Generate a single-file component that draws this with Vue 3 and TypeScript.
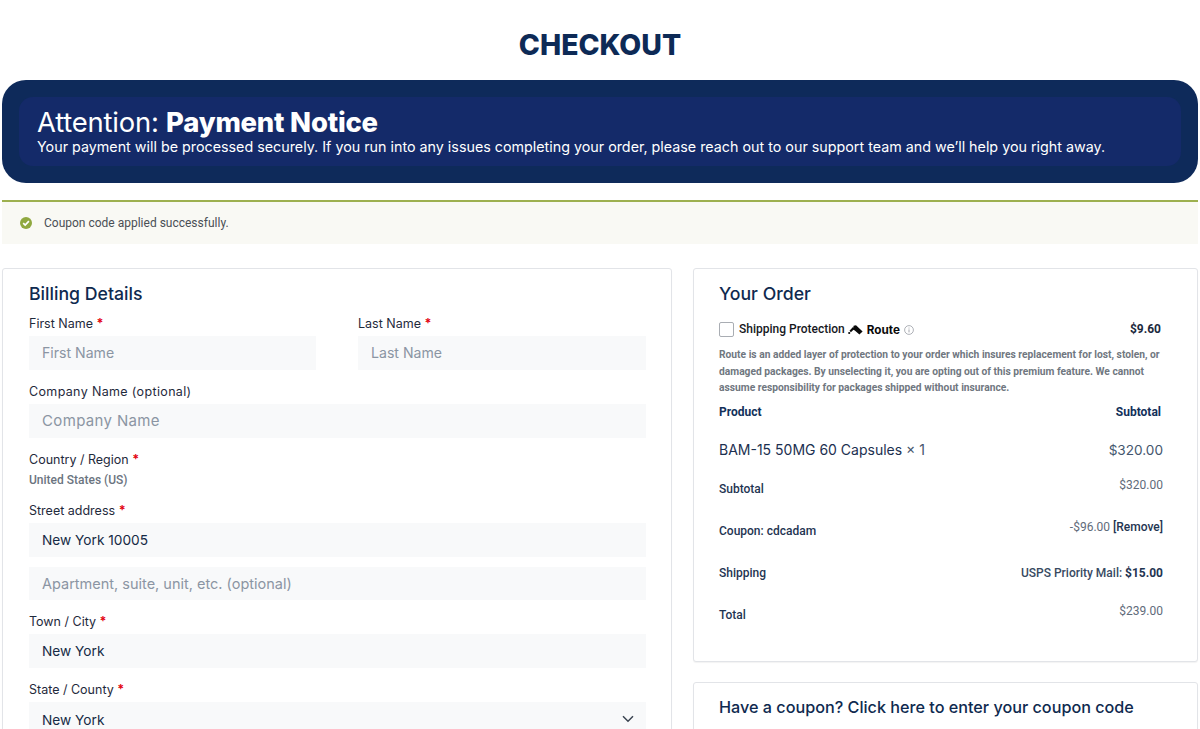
<script setup lang="ts">
const totals = [
  { label: 'Subtotal', amount: '$320.00' },
  { label: 'Coupon: cdcadam', amount: '-$96.00', link: '[Remove]' },
]
</script>

<template>
  <div class="page">
    <h1 class="page-title">CHECKOUT</h1>

    <section class="notice-banner">
      <div class="notice-inner">
        <h2>Attention: <strong>Payment Notice</strong></h2>
        <p>Your payment will be processed securely. If you run into any issues completing your order, please reach out to our support team and we’ll help you right away.</p>
      </div>
    </section>

    <div class="success-msg">
      <svg class="check" width="12" height="12" viewBox="0 0 12 12">
        <circle cx="6" cy="6" r="6" fill="#8fa83f" />
        <path d="M3.2 6.2 5.2 8.1 8.9 4.2" fill="none" stroke="#fff" stroke-width="1.7" />
      </svg>
      <span>Coupon code applied successfully.</span>
    </div>

    <div class="columns">
      <section class="card billing">
        <h3>Billing Details</h3>
        <div class="name-row">
          <div class="field">
            <label>First Name <em>*</em></label>
            <input type="text" placeholder="First Name" />
          </div>
          <div class="field">
            <label>Last Name <em>*</em></label>
            <input type="text" placeholder="Last Name" />
          </div>
        </div>
        <div class="field company">
          <label>Company Name (optional)</label>
          <input type="text" placeholder="Company Name" />
        </div>
        <div class="field country">
          <label>Country / Region <em>*</em></label>
          <strong>United States (US)</strong>
        </div>
        <div class="field">
          <label>Street address <em>*</em></label>
          <input type="text" value="New York 10005" />
          <input class="second-line" type="text" placeholder="Apartment, suite, unit, etc. (optional)" />
        </div>
        <div class="field">
          <label>Town / City <em>*</em></label>
          <input type="text" value="New York" />
        </div>
        <div class="field">
          <label>State / County <em>*</em></label>
          <div class="select">
            <span>New York</span>
            <svg width="12" height="8" viewBox="0 0 12 8">
              <path d="M1 1.2 6 6.2 11 1.2" fill="none" stroke="#3a4350" stroke-width="1.5" />
            </svg>
          </div>
        </div>
      </section>

      <div class="side">
        <section class="card order">
          <h3>Your Order</h3>
          <div class="protect-row">
            <span class="checkbox"></span>
            <span class="protect-label">Shipping Protection</span>
            <svg class="route-logo" width="15" height="10" viewBox="0 0 15 10">
              <path d="M5.6 0.8 8 0.3 14.6 6.6 11.4 9.4 6.8 5.4 5 4.4Z" fill="#0a0a0a" />
              <path d="M5 2 6.3 4 2.9 7.2 1.5 5.8Z" fill="#0a0a0a" />
              <circle cx="1.2" cy="8" r="1.1" fill="#0a0a0a" />
            </svg>
            <span class="route-name">Route</span>
            <svg class="info" width="10" height="10" viewBox="0 0 10 10">
              <circle cx="5" cy="5" r="4.4" fill="none" stroke="#8d9199" stroke-width="0.7" />
              <path d="M5 4.4V7.4M5 2.6V3.5" stroke="#8d9199" stroke-width="0.8" />
            </svg>
            <span class="protect-price">$9.60</span>
          </div>
          <p class="protect-desc">Route is an added layer of protection to your order which insures replacement for lost, stolen, or damaged packages. By unselecting it, you are opting out of this premium feature. We cannot assume responsibility for packages shipped without insurance.</p>
          <div class="table-head">
            <span>Product</span>
            <span>Subtotal</span>
          </div>
          <div class="item-row">
            <span>BAM-15 50MG 60 Capsules <small>× 1</small></span>
            <span class="item-price">$320.00</span>
          </div>
          <div v-for="row in totals" :key="row.label" class="total-row">
            <span class="total-label">{{ row.label }}</span>
            <span class="total-value">{{ row.amount }} <a v-if="row.link">{{ row.link }}</a></span>
          </div>
          <div class="total-row">
            <span class="total-label">Shipping</span>
            <span class="ship-value">USPS Priority Mail: <b>$15.00</b></span>
          </div>
          <div class="total-row">
            <span class="total-label">Total</span>
            <span class="total-value">$239.00</span>
          </div>
        </section>

        <section class="card coupon">
          <h3>Have a coupon? Click here to enter your coupon code</h3>
        </section>
      </div>
    </div>
  </div>
</template>

<style>
html,
body {
  overflow: hidden;
  background: #fff;
}
</style>

<style scoped>
.page {
  height: 729px;
  overflow: hidden;
  padding: 0 2px;
  box-sizing: border-box;
  font-family: Inter, 'Liberation Sans', sans-serif;
  color: #0f2a4f;
}

.page-title {
  margin: 0;
  padding-top: 28px;
  height: 80px;
  box-sizing: border-box;
  text-align: center;
  font-size: 28.4px;
  line-height: 34px;
  font-weight: 800;
  color: #0d2a56;
}

.notice-banner {
  background: #0e2a5a;
  border-radius: 24px;
  padding: 17px;
  height: 103px;
  box-sizing: border-box;
}

.notice-inner {
  height: 69px;
  background: #142a69;
  border-radius: 14px;
  padding: 11px 18px 0;
  box-sizing: border-box;
  color: #fff;
}

.notice-inner h2 {
  margin: 0;
  font-size: 27.4px;
  line-height: 28px;
  font-weight: 400;
  letter-spacing: -0.2px;
}

.notice-inner h2 strong {
  font-weight: 800;
}

.notice-inner p {
  margin: 1px 0 0;
  font-size: 14.3px;
  line-height: 20px;
  white-space: nowrap;
}

.success-msg {
  margin-top: 17px;
  height: 44px;
  box-sizing: border-box;
  border-top: 2px solid #9db04f;
  background: #f9f9f4;
  display: flex;
  align-items: center;
  gap: 12px;
  padding-left: 18px;
  font-family: Roboto, 'Liberation Sans', sans-serif;
  font-size: 12px;
  color: #4a4f55;
}

.columns {
  margin-top: 24px;
  display: flex;
  align-items: flex-start;
  gap: 21px;
}

.card {
  background: #fff;
  border: 1px solid #e2e4e8;
  border-radius: 3px;
  box-sizing: border-box;
  box-shadow: 0 1px 1px rgba(0, 0, 0, 0.05);
}

.card h3 {
  margin: 0;
  font-size: 17.7px;
  line-height: 24px;
  font-weight: 500;
  color: #0f2a4f;
}

.billing {
  width: 670px;
  flex: none;
  height: 800px;
  padding: 13px 25px 0 26px;
}

.field {
  display: flex;
  flex-direction: column;
  margin-bottom: 12px;
}

.field label {
  font-size: 12.5px;
  line-height: 18px;
  color: #1f2a3c;
  padding-top: 1px;
  margin-bottom: 3px;
}

.field label em {
  color: #e30613;
  font-style: normal;
  font-weight: 700;
}

.field input,
.select {
  height: 34px;
  width: 100%;
  box-sizing: border-box;
  border: none;
  outline: none;
  padding: 0 13px;
  background: #f8f9fa;
  font-family: Inter, 'Liberation Sans', sans-serif;
  font-size: 13.7px;
  color: #152a45;
}

.field input::placeholder {
  font-size: 14.5px;
  color: #8b95a3;
  opacity: 1;
}

.name-row .field input::placeholder {
  font-size: 14.1px;
}

.field .second-line {
  margin-top: 10px;
  height: 33px;
}

.company label,
.company input::placeholder {
  letter-spacing: 0.35px;
}

.company input::placeholder {
  font-size: 15px;
}

.name-row {
  display: grid;
  grid-template-columns: 287px 288px;
  column-gap: 42px;
  margin-top: 8px;
}

.country {
  margin-bottom: 13px;
}

.country strong {
  font-family: Roboto, 'Liberation Sans', sans-serif;
  font-size: 12px;
  line-height: 16px;
  font-weight: 500;
  color: #6b7480;
}

.select {
  display: flex;
  align-items: center;
  justify-content: space-between;
  padding-right: 12px;
}

.select span {
  padding-top: 2px;
}

.side {
  flex: 1;
  min-width: 0;
  display: flex;
  flex-direction: column;
  gap: 20px;
}

.order {
  height: 394px;
  padding: 13px 36px 0 25px;
  font-family: Roboto, 'Liberation Sans', sans-serif;
}

.order h3 {
  font-family: Inter, 'Liberation Sans', sans-serif;
}

.protect-row {
  margin-top: 15px;
  height: 16px;
  display: flex;
  align-items: center;
  font-size: 12px;
  font-weight: 500;
  color: #16181d;
}

.checkbox {
  width: 15px;
  height: 15px;
  box-sizing: border-box;
  border: 1px solid #a9adb3;
  border-radius: 2px;
  background: #fff;
  margin-right: 5px;
}

.route-logo {
  margin: 1px 4px 0 3px;
}

.route-name {
  font-family: Inter, 'Liberation Sans', sans-serif;
  font-size: 11.7px;
  font-weight: 700;
  color: #0a0a0a;
  margin-top: 1px;
}

.info {
  margin: 1px 0 0 4px;
}

.protect-price {
  margin-left: auto;
  font-weight: 700;
  color: #1c2a3d;
}

.protect-desc {
  margin: 10px 0 0;
  font-size: 10.25px;
  line-height: 16.5px;
  font-weight: 700;
  color: #70777f;
}

.table-head {
  margin-top: 7px;
  display: flex;
  justify-content: space-between;
  font-size: 12px;
  line-height: 16px;
  font-weight: 700;
  color: #12305a;
}

.item-row {
  margin: 18px -2px 0 0;
  height: 24px;
  display: flex;
  justify-content: space-between;
  align-items: center;
  font-family: Inter, 'Liberation Sans', sans-serif;
  font-size: 14px;
  color: #1c3050;
}

.item-row small {
  font-size: 14px;
  color: #46556c;
}

.item-price {
  font-size: 13.6px;
  color: #44566d;
}

.total-row {
  margin: 0 -2px 0 0;
  height: 42px;
  display: flex;
  justify-content: space-between;
  align-items: flex-start;
  font-size: 12px;
  line-height: 16px;
}

.item-row + .total-row {
  margin-top: 14px;
}

.total-label {
  padding-top: 5px;
  font-weight: 500;
  color: #1f3552;
}

.total-value {
  padding-top: 1px;
  color: #5f6b7a;
}

.total-value a {
  font-weight: 500;
  color: #1f3552;
}

.ship-value {
  padding-top: 5px;
  font-weight: 500;
  color: #384a62;
}

.ship-value b {
  font-weight: 700;
  color: #1f3552;
}

.coupon {
  height: 120px;
  padding: 12px 25px;
}

.coupon h3 {
  font-size: 16.2px;
}
</style>
